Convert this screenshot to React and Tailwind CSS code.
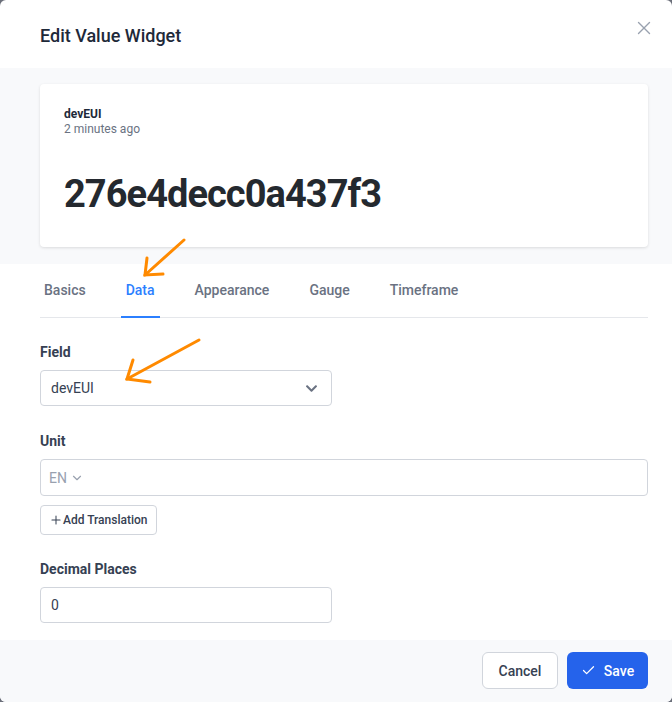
import { Check, ChevronDown, Plus, X } from "lucide-react";
import { FaChevronDown } from "react-icons/fa";

const TABS = ["Basics", "Data", "Appearance", "Gauge", "Timeframe"];

const Label = ({ children }) => <div className="text-sm font-bold text-gray-700 leading-5 mb-2">{children}</div>;

const Arrow = ({ x1, y1, x2, y2, h1, h2 }) => (
    <g stroke="#ff8a00" strokeWidth="3" strokeLinecap="round" fill="none">
        <path d={`M${x1} ${y1} L${x2} ${y2}`} />
        <path d={`M${h1[0]} ${h1[1]} L${x2} ${y2} L${h2[0]} ${h2[1]}`} />
    </g>
);

export default function App() {
    return (
        <div className="w-[672px] h-[702px] bg-[#6b6f7a]" style={{ fontFamily: "Roboto, 'Liberation Sans', sans-serif" }}>
            <div className="relative w-full h-full bg-white rounded-md overflow-hidden flex flex-col">
                {/* header */}
                <div className="h-[68px] pl-10 pr-[17px] flex items-center justify-between shrink-0">
                    <h2 className="text-lg font-medium text-gray-800 pt-1">Edit Value Widget</h2>
                    <button className="text-gray-400 -mt-[13px]">
                        <X size={22} strokeWidth={1.5} />
                    </button>
                </div>

                {/* preview */}
                <div className="bg-[#f8f9fb] pl-10 pr-6 pt-4 pb-[17px] shrink-0">
                    <div className="bg-white rounded-sm shadow-[0_1px_3px_rgba(0,0,0,0.12)] h-[163px] px-6 pt-[22px]">
                        <div className="text-xs font-bold text-gray-800 leading-4">devEUI</div>
                        <div className="text-xs text-gray-500 leading-[14px]">2 minutes ago</div>
                        <div className="mt-[34px] text-[38px] leading-[48px] font-bold text-[#24292f] tracking-tight">276e4decc0a437f3</div>
                    </div>
                </div>

                {/* form */}
                <div className="flex-1 pl-10 pr-6 pt-4 overflow-hidden">
                    <nav className="flex gap-[30px] border-b border-gray-200">
                        {TABS.map((t, i) => (
                            <div
                                key={t}
                                className={`px-[5px] pb-4 leading-5 text-sm font-medium border-b-2 -mb-px ${i === 0 ? "-ml-px" : ""} ${
                                    t === "Data" ? "text-blue-500 border-blue-500" : "text-gray-500 border-transparent"
                                }`}
                            >
                                {t}
                            </div>
                        ))}
                    </nav>

                    <div className="pt-6">
                        <Label>Field</Label>
                        <div className="w-[292px] h-[36px] border border-gray-300 rounded flex items-center justify-between px-[10px] text-sm text-gray-700">
                            <span>devEUI</span>
                            <FaChevronDown size={13} className="text-gray-500 mr-[3px]" />
                        </div>
                    </div>

                    <div className="pt-[25px]">
                        <Label>Unit</Label>
                        <div className="h-[37px] border border-gray-300 rounded flex items-center px-2 text-sm text-gray-400">
                            <span>EN</span>
                            <ChevronDown size={14} className="ml-[3px]" />
                        </div>
                        <button className="mt-[9px] h-[30px] px-2 border border-gray-300 rounded flex items-center text-xs font-medium text-gray-700">
                            <Plus size={14} strokeWidth={1.75} />
                            <span>Add Translation</span>
                        </button>
                    </div>

                    <div className="pt-6">
                        <Label>Decimal Places</Label>
                        <div className="w-[292px] h-[36px] border border-gray-300 rounded flex items-center px-[10px] text-sm text-gray-700">0</div>
                    </div>
                </div>

                {/* footer */}
                <div className="h-[62px] bg-[#f8f9fb] shrink-0 flex justify-end items-start pt-3 pr-6 gap-[9px]">
                    <button className="h-[37px] w-[76px] rounded-md border border-gray-300 bg-white text-sm font-medium text-gray-700">Cancel</button>
                    <button className="h-[37px] w-[81px] rounded-md bg-[#2563eb] text-white text-sm font-medium flex items-center justify-center gap-2">
                        <Check size={15} strokeWidth={2} />
                        Save
                    </button>
                </div>

                {/* annotations */}
                <svg className="absolute inset-0 pointer-events-none" width="672" height="702">
                    <Arrow x1={184} y1={240} x2={145} y2={275} h1={[147, 258]} h2={[163, 274]} />
                    <Arrow x1={199} y1={340} x2={127} y2={379} h1={[133, 360]} h2={[150, 382]} />
                </svg>
            </div>
        </div>
    );
}
